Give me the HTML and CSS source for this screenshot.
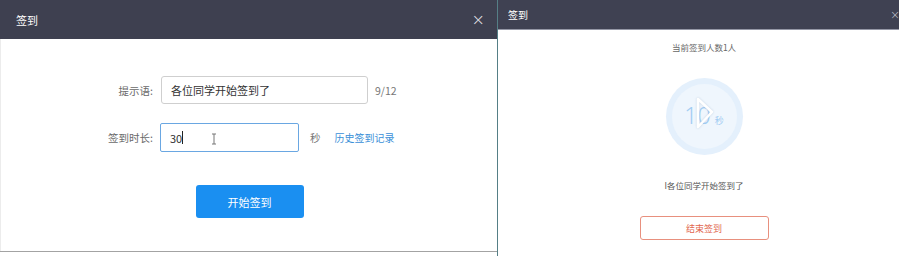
FILE: index.html
```html
<!DOCTYPE html>
<html lang="zh-CN">
<head>
  <meta charset="UTF-8">
  <title>签到</title>
  <link rel="stylesheet" href="styles.css">
</head>
<body>
  <div class="screen">
    <section class="dialog dialog-setup">
      <header class="dialog-head">
        <span class="dialog-title">签到</span>
        <span class="dialog-close">×</span>
      </header>

      <div class="setup-body">
        <div class="form-row">
          <label class="form-label">提示语:</label>
          <div class="field field-tip">各位同学开始签到了</div>
          <span class="counter">9/12</span>
        </div>

        <div class="form-row">
          <label class="form-label">签到时长:</label>
          <div class="field field-time">
            <span>30</span><span class="caret"></span>
            <svg class="ibeam" width="6" height="12" viewBox="0 0 6 12">
              <path d="M1 1h4M3 1v10M1 11h4" stroke="#777" stroke-width="1" fill="none"/>
            </svg>
          </div>
          <span class="unit">秒</span>
          <a class="history" href="#">历史签到记录</a>
        </div>

        <button class="btn-start">开始签到</button>
      </div>
    </section>

    <div class="divider"></div>

    <section class="dialog dialog-live">
      <header class="dialog-head dialog-head-small">
        <span class="dialog-title">签到</span>
        <span class="dialog-close">×</span>
      </header>

      <div class="live-body">
        <p class="live-count">当前签到人数1人</p>

        <div class="timer">
          <div class="timer-inner">
            <span class="timer-num">10</span>
            <span class="timer-unit">秒</span>
          </div>
          <!-- play overlay from the video player -->
          <svg class="play" width="18" height="32" viewBox="0 0 18 32">
            <path d="M2 2L16 15L2 30Z" fill="none" stroke="#fff" stroke-width="2.5" stroke-linejoin="round"/>
          </svg>
        </div>

        <p class="live-tip">I各位同学开始签到了</p>

        <button class="btn-end">结束签到</button>
      </div>
    </section>
  </div>
</body>
</html>
```

FILE: styles.css
```css
body {
  margin: 0;
  background: #fff;
  font-family: "Noto Sans CJK SC", "Noto Sans", sans-serif;
}

.screen {
  display: flex;
  width: 899px;
  height: 256px;
  overflow: hidden;
}

.dialog {
  background: #fff;
}

.dialog-setup {
  flex: none;
  width: 497px;
  height: 251px;
  border-bottom: 1px solid #a3a3a3;
  box-shadow: inset 1px 0 0 #ececec;
}

.divider {
  flex: none;
  width: 1px;
  background: #557f86;
}

/* wider than what is left of the window, the close button gets cut */
.dialog-live {
  flex: none;
  width: 412px;
}

.dialog-head {
  height: 39px;
  background: #3e4050;
  display: flex;
  align-items: center;
  justify-content: space-between;
  padding: 0 12px 0 16px;
  color: #fff;
}

.dialog-title {
  font-size: 11px;
}

.dialog-close {
  font-size: 16px;
  color: #e4e4ea;
  font-family: "DejaVu Sans", sans-serif;
  font-weight: 300;
}

.dialog-head-small {
  height: 29px;
  border-bottom: 1px solid #9597a6;
  padding: 0 10px 0 10px;
  background: #3f4152;
}

.dialog-head-small .dialog-title {
  font-size: 10px;
}

.dialog-head-small .dialog-close {
  font-size: 12px;
  color: #c8c9d2;
}

/* left: setup form */

.setup-body {
  display: flex;
  flex-direction: column;
  padding-top: 37px;
}

.form-row {
  display: flex;
  align-items: center;
  margin-bottom: 19px;
  color: #666;
}

.form-row + .form-row {
  margin-bottom: 33px;
}

.form-label {
  width: 153px;
  text-align: right;
  margin-right: 8px;
  font-size: 10.5px;
  color: #6a6a6a;
}

.field {
  box-sizing: border-box;
  height: 28px;
  display: flex;
  align-items: center;
  padding-left: 9px;
  font-size: 11px;
  color: #333;
  border: 1px solid #cfcfcf;
  border-radius: 3px;
}

.field-tip {
  width: 207px;
}

.field-time {
  width: 139px;
  height: 29px;
  margin-left: -1px;
  border-color: #6aa7e2;
  border-radius: 2px;
}

.caret {
  width: 1px;
  height: 13px;
  background: #222;
}

.ibeam {
  margin-left: 28px;
  margin-top: 2px;
}

.counter {
  margin-left: 7px;
  font-size: 10.5px;
  color: #777;
}

.unit {
  margin-left: 11px;
  font-size: 10.5px;
  color: #777;
}

.history {
  margin-left: 14px;
  font-size: 10px;
  color: #3a8fd8;
  text-decoration: none;
}

.btn-start {
  align-self: center;
  width: 108px;
  height: 33px;
  border: none;
  border-radius: 3px;
  background: #1a8ff1;
  color: #fff;
  font-family: inherit;
  font-size: 11px;
  margin-left: 2px;
}

/* right: running check-in */

.live-body {
  display: flex;
  flex-direction: column;
  align-items: center;
  padding-top: 10px;
}

.live-count,
.live-tip {
  margin: 0;
  height: 14px;
  line-height: 14px;
  font-size: 8.5px;
  color: #666;
}

.timer {
  position: relative;
  box-sizing: border-box;
  width: 77px;
  height: 77px;
  margin-top: 24px;
  padding: 6px;
  border-radius: 50%;
  background: #e4f0fc;
}

.timer-inner {
  width: 100%;
  height: 100%;
  border-radius: 50%;
  background: #eff6fd;
  display: flex;
  align-items: baseline;
  justify-content: center;
  padding-top: 18px;
  box-sizing: border-box;
  color: #a3cdf3;
}

.timer-num {
  font-size: 23px;
  line-height: 26px;
  font-family: "Noto Sans", sans-serif;
  font-weight: 300;
}

.timer-unit {
  font-size: 9px;
  margin-left: 4px;
}

.play {
  position: absolute;
  left: 30px;
  top: 19px;
  filter: drop-shadow(0 0 1px rgba(120, 150, 180, 0.35));
}

.live-tip {
  margin-top: 23px;
  color: #555;
}

.btn-end {
  margin-top: 24px;
  width: 129px;
  height: 24px;
  background: #fff;
  border: 1px solid #e8907e;
  border-radius: 3px;
  color: #e2674f;
  font-family: inherit;
  font-size: 9px;
}
```
